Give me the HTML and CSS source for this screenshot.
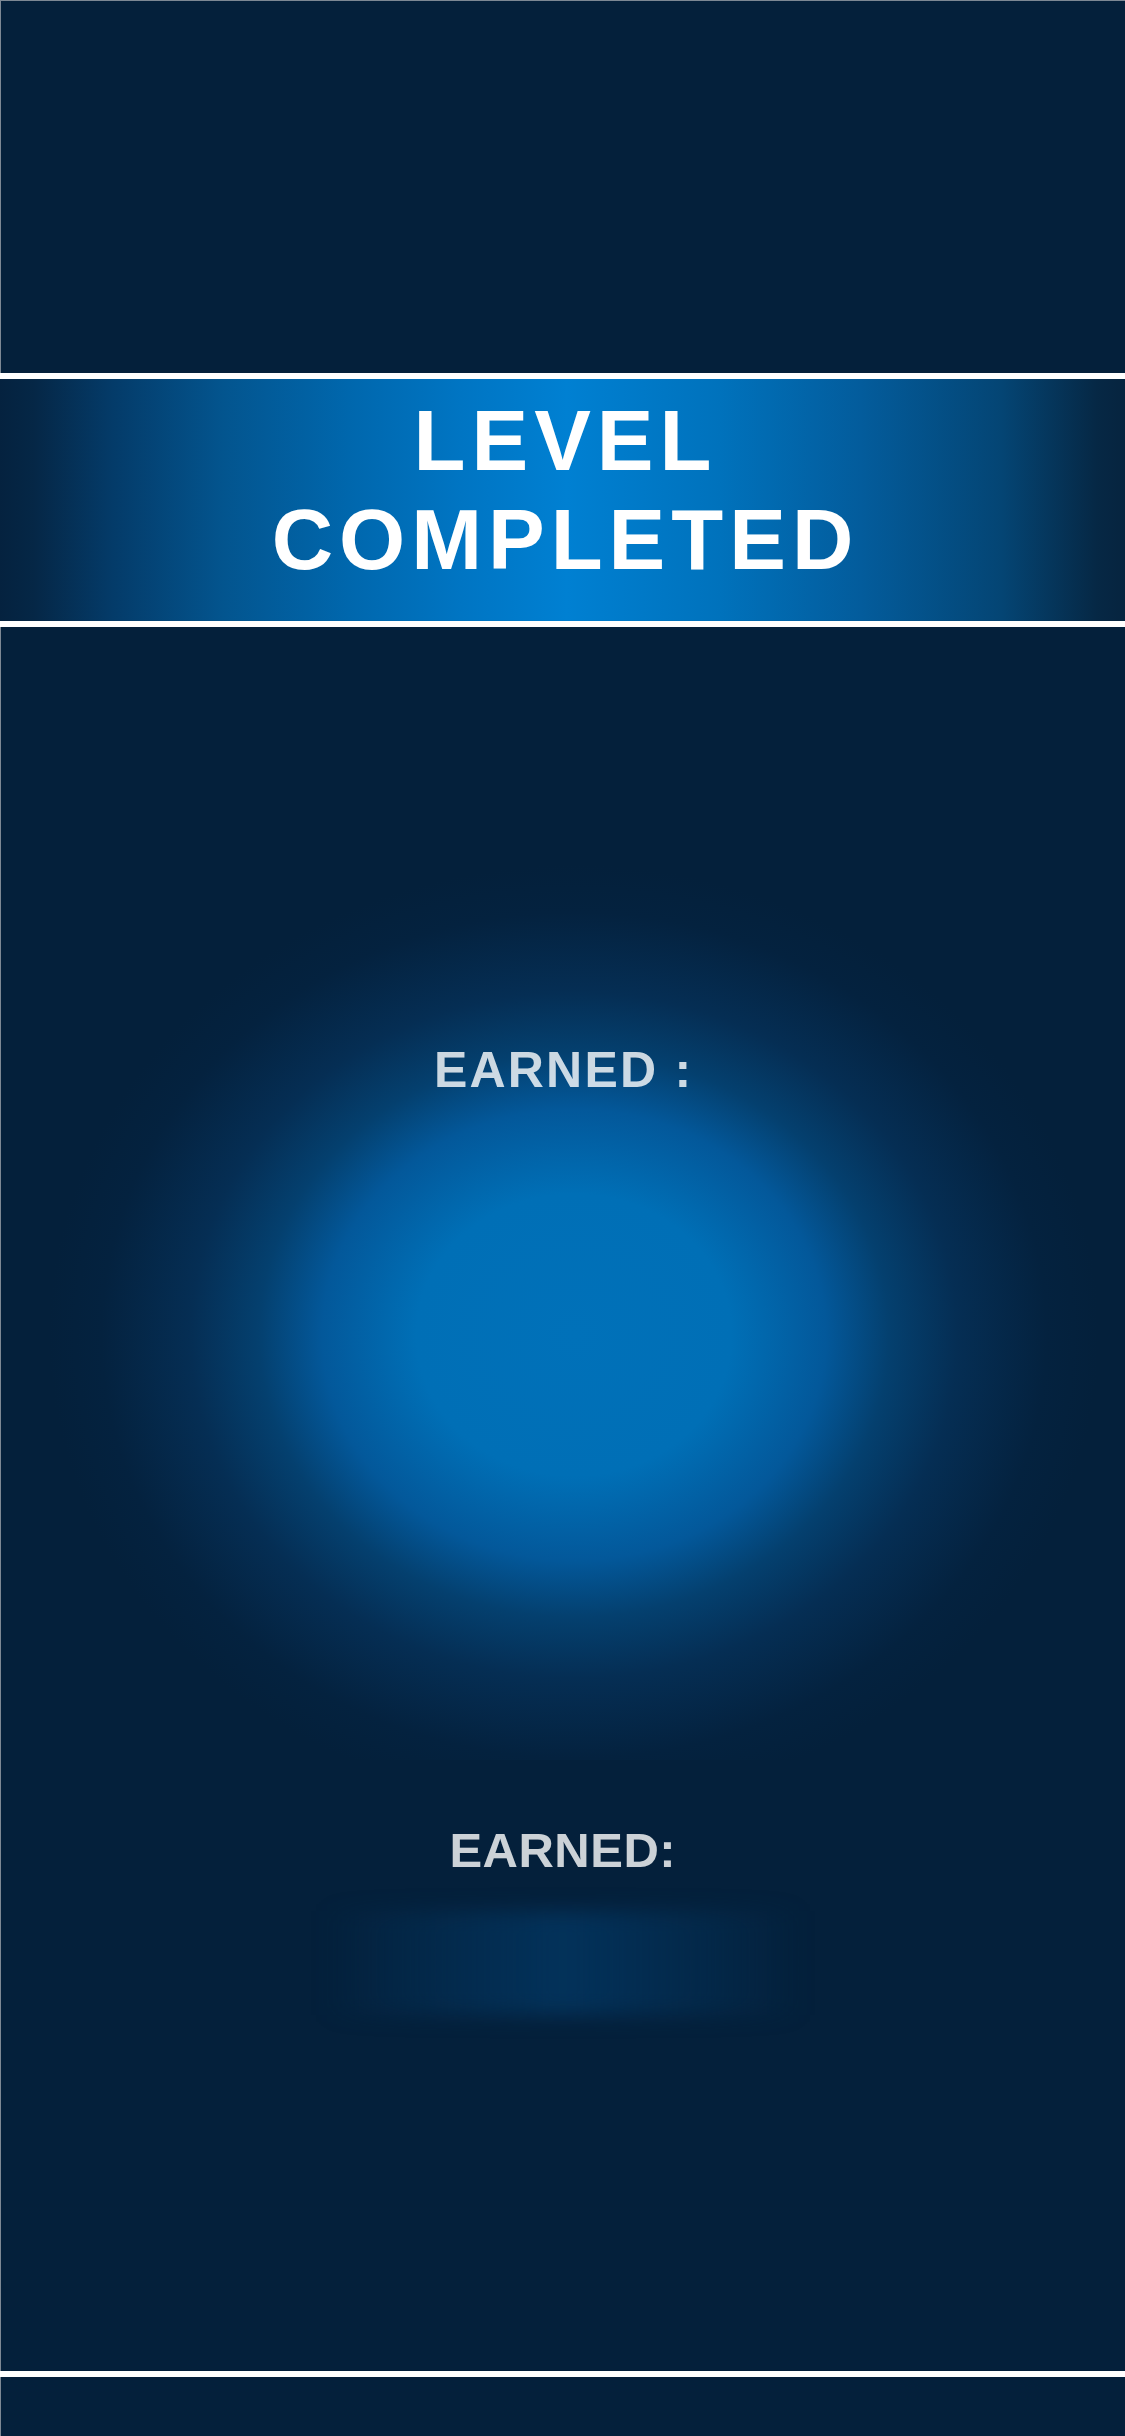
FILE: index.html
```html
<!DOCTYPE html>
<html lang="en">
<head>
<meta charset="utf-8">
<title>Level Completed</title>
<link rel="stylesheet" href="styles.css">
</head>
<body>
<main class="screen">
  <div class="top-space"></div>
  <div class="rule"></div>
  <header class="banner">
    <h1 class="title">LEVEL<br>COMPLETED</h1>
  </header>
  <div class="rule"></div>
  <section class="reward">
    <p class="label label-main">EARNED :</p>
  </section>
  <section class="reward-alt">
    <p class="label label-alt">EARNED:</p>
    <div class="slot-glow"></div>
  </section>
  <div class="rule"></div>
  <div class="bottom-space"></div>
</main>
</body>
</html>
```

FILE: styles.css
```css
* { box-sizing: border-box; }

html, body {
  margin: 0;
  padding: 0;
  background: #04203b;
}

.screen {
  width: 1125px;
  height: 2436px;
  display: flex;
  flex-direction: column;
  background: #04203b;
  box-shadow: inset 1px 1px 0 #7d8894;
  font-family: "Liberation Sans", Arial, sans-serif;
  overflow: hidden;
}

.top-space { height: 373px; flex: none; }
.bottom-space { height: 59px; flex: none; }

.rule {
  height: 6px;
  flex: none;
  background: #ffffff;
}

.banner {
  height: 242px;
  flex: none;
  padding-top: 12px;
  background: linear-gradient(90deg,
    #05223f 0%,
    #052746 3%,
    #043b69 10%,
    #03558f 20%,
    #0067ad 31%,
    #0075c3 41%,
    #0080d2 50.4%,
    #0072bc 64%,
    #035c9c 76.5%,
    #044574 89%,
    #062845 97.5%,
    #06243f 100%);
}

.title {
  margin: 0;
  padding-left: 6px;
  text-align: center;
  color: #ffffff;
  font-size: 85px;
  line-height: 99px;
  font-weight: 700;
  letter-spacing: 6px;
}

.reward {
  height: 1133px;
  flex: none;
  padding-top: 418px;
  background: radial-gradient(ellipse 525px 470px at 574px 708px,
    #0071b9 0%,
    #006fb6 30%,
    #03589a 48%,
    #04406f 60%,
    #052e54 73%,
    #04223f 90%,
    rgba(4, 32, 59, 0) 100%);
}

.reward-alt {
  flex: 1;
  padding-top: 66px;
  display: flex;
  flex-direction: column;
  align-items: center;
}

.label {
  margin: 0;
  text-align: center;
  color: rgba(255, 255, 255, 0.8);
  font-weight: 700;
  line-height: 1;
}

.label-main {
  font-size: 50px;
  letter-spacing: 2.2px;
  padding-left: 2.2px;
}

.label-alt {
  font-size: 49px;
  letter-spacing: 0.5px;
  padding-left: 0.5px;
}

.slot-glow {
  margin-top: 36px;
  width: 480px;
  height: 104px;
  background: linear-gradient(90deg,
    rgba(3, 50, 90, 0) 0%,
    rgba(3, 50, 90, 0.45) 20%,
    rgba(3, 52, 94, 0.9) 50%,
    rgba(3, 50, 90, 0.45) 80%,
    rgba(3, 50, 90, 0) 100%);
  filter: blur(10px);
}
```
